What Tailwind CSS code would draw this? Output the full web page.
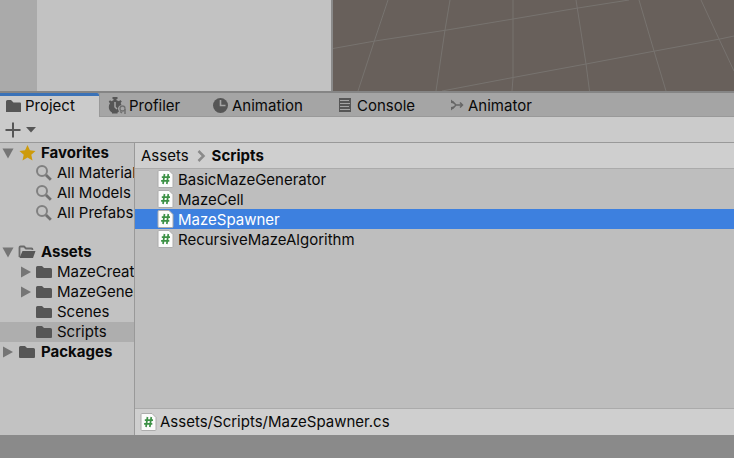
<!DOCTYPE html>
<html lang="en">
<head>
    <meta charset="UTF-8">
    <meta name="viewport" content="width=device-width, initial-scale=1.0">
    <title>Project</title>
    <script src="https://cdn.jsdelivr.net/npm/@tailwindcss/browser@4"></script>
</head>
<body class="flex h-screen flex-col overflow-hidden bg-[#8a8a8a] font-['Inter',sans-serif] text-[15px] leading-5 text-[#090909]">

    <!-- Shared icons -->
    <svg class="hidden">
        <symbol id="folder" viewBox="0 0 16 16"><path d="M0 3.500Q0 2 1.500 2H6L8 4H14.500Q16 4 16 5.500V13Q16 14 15 14H1Q0 14 0 13Z" fill="#565656"/></symbol>
        <symbol id="folder-open" viewBox="0 0 18 16"><path d="M1.500 13V3.500Q1.500 2.500 2.500 2.500H6L8 4.500H13.500Q14.500 4.500 14.500 6" fill="none" stroke="#6a6a6a" stroke-width="1.800"/><path d="M4.500 7H17.500L15 14H1.500Z" fill="#565656"/></symbol>
        <symbol id="search" viewBox="0 0 16 16"><circle cx="6" cy="6" r="5" fill="none" stroke="#808080" stroke-width="2"/><path d="M10 10L14.800 14.800" stroke="#707070" stroke-width="2.800"/></symbol>
        <symbol id="down" viewBox="0 0 12 12"><path d="M0.500 1.500H11.500L6 11.500Z" fill="#757575"/></symbol>
        <symbol id="right" viewBox="0 0 12 12"><path d="M1 0.500L11 6L1 11.500Z" fill="#757575"/></symbol>
        <symbol id="script" viewBox="0 0 16 18"><path d="M1.500 0.500H11.500L15.500 4.500V16.500Q15.500 17.500 14.500 17.500H1.500Q0.500 17.500 0.500 16.500V1.500Q0.500 0.500 1.500 0.500Z" fill="#fbfbfb" stroke="#acacac"/><path d="M7 4L5.500 14M10.800 4L9.300 14M4.300 7.200H12.500M3.600 10.800H11.800" fill="none" stroke="#3d9146" stroke-width="1.700"/></symbol>
    </svg>

    <!-- Hierarchy and scene view -->
    <div class="flex h-[93px] shrink-0 border-b-2 border-[#858585]">
        <div class="w-[37px] shrink-0 bg-[#aaaaaa]"></div>
        <div class="w-[296px] shrink-0 border-r-2 border-[#8a8a8a] bg-[#c2c2c2]"></div>
        <div class="min-w-0 flex-1 overflow-hidden bg-[#68605b]">
            <svg class="h-[91px] w-[401px]" viewBox="0 0 401 91" fill="none" stroke="#77736f">
                <path d="M0 48.500L42 41L114 30L180 19L245 8L296 0M109 91L180 77.500L253 64L322 51L387 39L401 36"/>
                <path d="M55 0L41 42L25 91M117 0L112 30L103 91M180 0V78L179 91M243 0L253 64L256.500 91M306 0L321 51L333 91M368 0L386 39L401 71"/>
            </svg>
        </div>
    </div>

    <!-- Tabs -->
    <div role="tablist" class="flex h-6 shrink-0 bg-[#a5a5a5]">
        <button role="tab" aria-selected="true" class="flex w-[99px] items-center gap-0.5 rounded-tr-xs border-t-3 border-[#3a72b8] bg-[#cbcbcb] pb-0.5 pl-[3px]">
            <svg class="h-5 w-5" viewBox="0 0 20 20"><path d="M3 5.500Q3 4 4.500 4H8L10.500 6.500H17Q18 6.500 18 7.500V16H3Z" fill="#565656"/></svg>
            Project
        </button>
        <button role="tab" class="flex w-[104px] items-center gap-0.5 border-b border-l border-[#999999] pt-0.5 pl-[7px]">
            <svg class="h-5 w-5" viewBox="0 0 20 20"><path d="M5.500 1H10.500V3H9.500V4.200Q11 4.500 12 5.200L13.300 4L14.800 5.500L13.600 7Q14.500 8.500 14.300 9Q11.500 9.500 11 12Q10.800 14 12 15.200Q11.500 16 10.500 16.500V17.500H5V16.500Q1.800 14.500 1.800 11Q1.800 8.800 3 7.200L1.700 5.700L3 4.200L4.500 5.300Q5.300 4.600 6.500 4.200V3H5.500Z" fill="#565656"/><path d="M8 6V11L10 13" fill="none" stroke="#a5a5a5" stroke-width="1.500"/><circle cx="15.500" cy="12.500" r="2.500" fill="none" stroke="#707070" stroke-width="1.300"/><path d="M18 13V18M13 15.500L15 17" stroke="#707070" stroke-width="1.500"/></svg>
            Profiler
        </button>
        <button role="tab" class="flex w-[124px] items-center gap-0.5 border-b border-[#999999] pt-0.5 pl-[7px]">
            <svg class="h-5 w-5" viewBox="0 0 20 20"><circle cx="10.500" cy="9.500" r="7.500" fill="#565656"/><path d="M10.500 4V9.500H15.500" fill="none" stroke="#a5a5a5" stroke-width="1.600"/></svg>
            Animation
        </button>
        <button role="tab" class="flex w-[111px] items-center gap-0.5 border-b border-[#999999] pt-0.5 pl-2">
            <svg class="h-5 w-5" viewBox="0 0 20 20"><path d="M4 2H16V16H4Z" fill="#565656"/><path d="M5 4.500H14M5 7.500H15M5 10.500H14M5 13.500H15" stroke="#a5a5a5"/></svg>
            Console
        </button>
        <button role="tab" class="flex w-[117px] items-center gap-0.5 border-b border-[#999999] pt-0.5 pl-2">
            <svg class="h-5 w-5" viewBox="0 0 20 20"><path d="M5 3.500L8.500 6.500L7.500 7.500L5 7ZM5 14.500V11L7.500 10.500L8.500 11.500Z" fill="#666666"/><path d="M6.500 5.500L10 9L6.500 12.500M10 9H16M14 6.500L16.500 9L14 11.500" fill="none" stroke="#666666" stroke-width="1.500"/></svg>
            Animator
        </button>
        <div class="flex-1 border-b border-[#999999]"></div>
    </div>

    <!-- Toolbar -->
    <div class="flex h-[26px] shrink-0 items-center border-b border-[#999999] bg-[#cbcbcb] pl-[5px]">
        <button aria-label="Create" class="flex items-center gap-1">
            <svg class="h-4 w-4" viewBox="0 0 16 16"><path d="M8 0.500V15.500M0.500 8H15.500" stroke="#565656" stroke-width="2"/></svg>
            <svg class="h-3 w-3" viewBox="0 0 12 12"><path d="M1 3H11L6 8.500Z" fill="#565656"/></svg>
        </button>
    </div>

    <div class="flex min-h-0 flex-1">
        <!-- Folder tree -->
        <nav class="w-[135px] shrink-0 overflow-hidden border-r border-[#999999] bg-[#c2c2c2] whitespace-nowrap">
            <ul>
                <li class="flex items-center pl-[2px] font-bold">
                    <svg class="mr-1 h-3 w-3 shrink-0"><use href="#down"/></svg>
                    <svg class="mr-[5px] h-[18px] w-[18px] shrink-0" viewBox="0 0 18 18"><path d="M9.500 1L11.900 6.300L17.500 7L13.300 10.800L14.500 16.500L9.500 13.600L4.500 16.500L5.700 10.800L1.500 7L7.100 6.300Z" fill="#cd9b0c"/></svg>
                    Favorites
                </li>
                <li class="flex items-center gap-[5px] pl-9"><svg class="h-4 w-4 shrink-0"><use href="#search"/></svg>All Materials</li>
                <li class="flex items-center gap-[5px] pl-9"><svg class="h-4 w-4 shrink-0"><use href="#search"/></svg>All Models</li>
                <li class="flex items-center gap-[5px] pl-9"><svg class="h-4 w-4 shrink-0"><use href="#search"/></svg>All Prefabs</li>
            </ul>
            <ul class="mt-[19px]">
                <li class="flex items-center pl-[2px] font-bold">
                    <svg class="mr-1 h-3 w-3 shrink-0"><use href="#down"/></svg>
                    <svg class="mr-[5px] h-4 w-[18px] shrink-0"><use href="#folder-open"/></svg>
                    Assets
                </li>
                <li class="flex items-center pl-5">
                    <svg class="mr-1 h-3 w-3 shrink-0"><use href="#right"/></svg>
                    <svg class="mr-[5px] h-4 w-4 shrink-0"><use href="#folder"/></svg>
                    MazeCreation
                </li>
                <li class="flex items-center pl-5">
                    <svg class="mr-1 h-3 w-3 shrink-0"><use href="#right"/></svg>
                    <svg class="mr-[5px] h-4 w-4 shrink-0"><use href="#folder"/></svg>
                    MazeGenerator
                </li>
                <li class="flex items-center gap-[5px] pl-9"><svg class="h-4 w-4 shrink-0"><use href="#folder"/></svg>Scenes</li>
                <li class="flex items-center gap-[5px] bg-[#aeaeae] pl-9"><svg class="h-4 w-4 shrink-0"><use href="#folder"/></svg>Scripts</li>
                <li class="flex items-center pl-[2px] font-bold">
                    <svg class="mr-1 h-3 w-3 shrink-0"><use href="#right"/></svg>
                    <svg class="mr-[5px] h-4 w-[18px] shrink-0"><use href="#folder"/></svg>
                    Packages
                </li>
            </ul>
        </nav>

        <!-- Folder contents -->
        <main class="flex min-w-0 flex-1 flex-col bg-[#bebebe]">
            <div class="flex h-[26px] shrink-0 items-center border-b border-[#ababab] bg-[#cfcfcf] pl-[6px]">
                <a href="#">Assets</a>
                <svg class="mr-[5px] ml-[6px] h-3 w-3" viewBox="0 0 12 12"><path d="M3.500 1L8.500 6L3.500 11" fill="none" stroke="#8a8a8a" stroke-width="2.500"/></svg>
                <a href="#" class="font-bold">Scripts</a>
            </div>
            <ul class="flex-1">
                <li class="flex h-5 items-center gap-1 pt-0.5 pl-[22px]"><svg class="mb-0.5 h-[18px] w-[17px]"><use href="#script"/></svg>BasicMazeGenerator</li>
                <li class="flex h-5 items-center gap-1 pt-0.5 pl-[22px]"><svg class="mb-0.5 h-[18px] w-[17px]"><use href="#script"/></svg>MazeCell</li>
                <li class="flex h-5 items-center gap-1 bg-[#3d80df] pt-0.5 pl-[22px] text-white"><svg class="mb-0.5 h-[18px] w-[17px]"><use href="#script"/></svg>MazeSpawner</li>
                <li class="flex h-5 items-center gap-1 pt-0.5 pl-[22px]"><svg class="mb-0.5 h-[18px] w-[17px]"><use href="#script"/></svg>RecursiveMazeAlgorithm</li>
            </ul>
            <div class="flex h-[27px] shrink-0 items-center gap-[3px] border-t border-[#ababab] bg-[#cfcfcf] pl-[5px]">
                <svg class="h-[18px] w-[17px]"><use href="#script"/></svg>
                Assets/Scripts/MazeSpawner.cs
            </div>
        </main>
    </div>

    <div class="h-[23px] shrink-0 bg-[#8a8a8a]"></div>
</body>
</html>
